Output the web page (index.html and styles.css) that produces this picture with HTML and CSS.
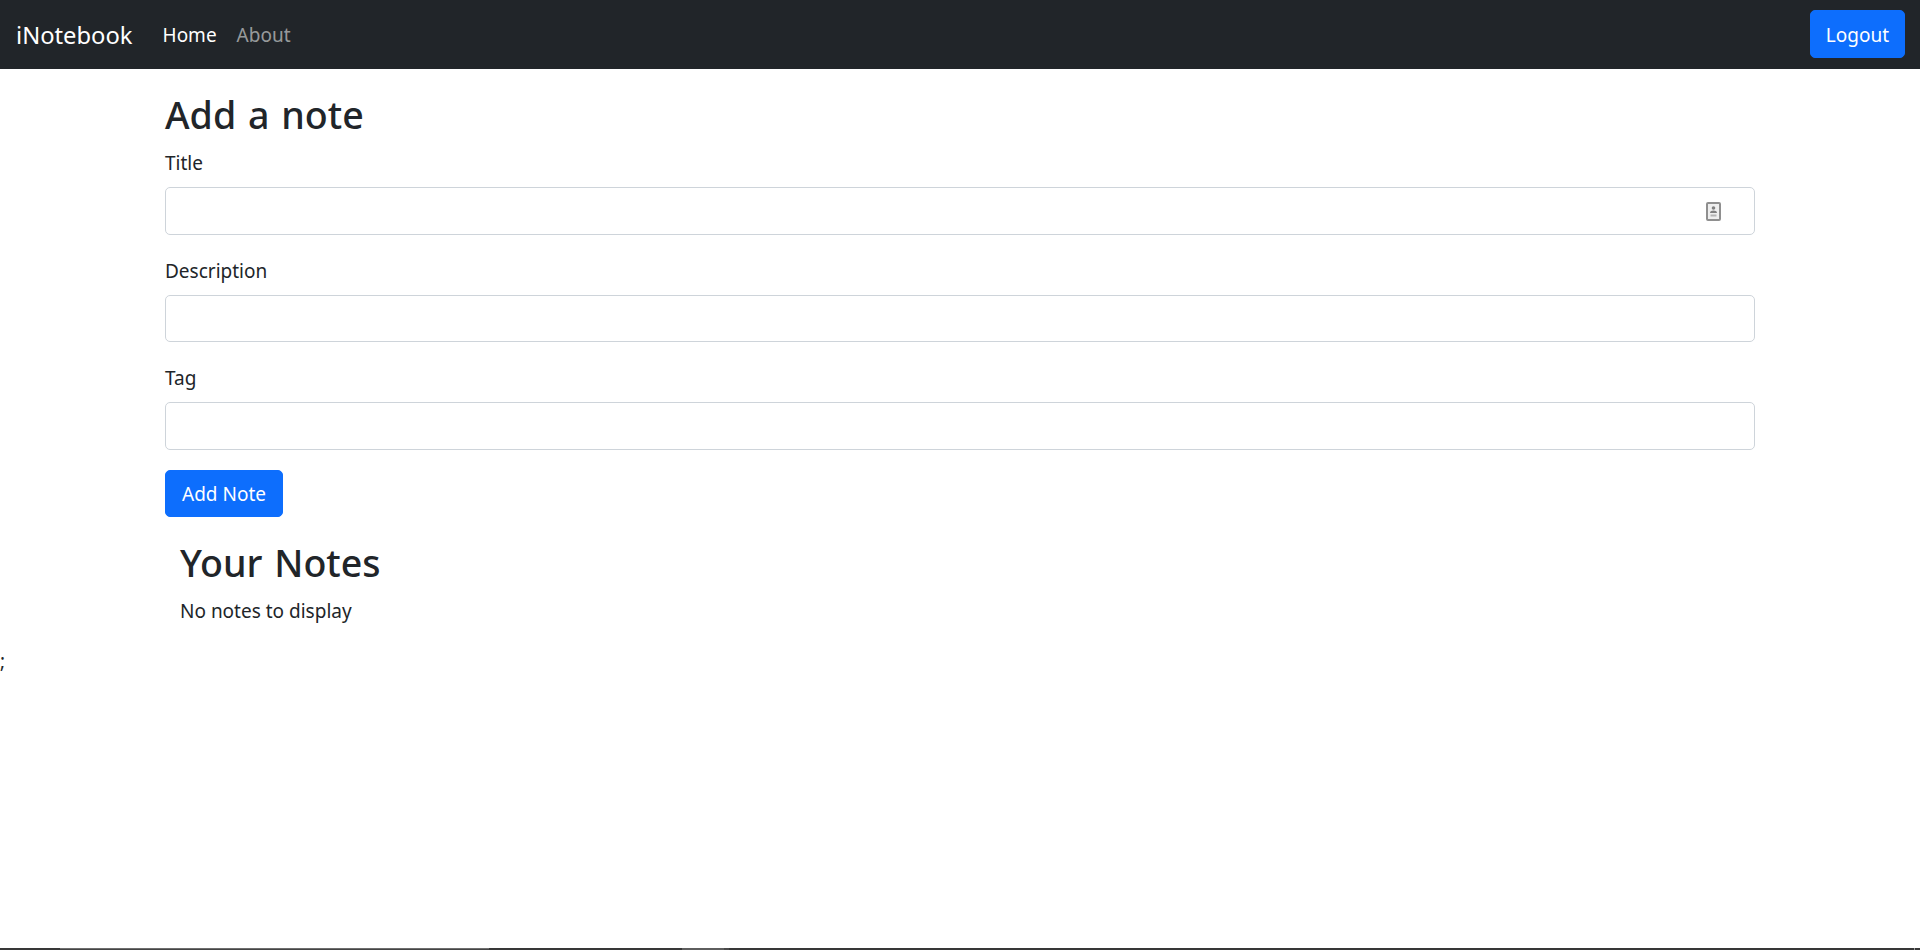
FILE: index.html
```html
<!DOCTYPE html>
<html lang="en">
<head>
<meta charset="utf-8">
<title>iNotebook</title>
<link rel="stylesheet" href="styles.css">
</head>
<body>
<nav class="navbar">
  <a class="brand" href="#">iNotebook</a>
  <ul class="nav-links">
    <li><a class="nav-link active" href="#">Home</a></li>
    <li><a class="nav-link" href="#">About</a></li>
  </ul>
  <button class="btn logout" type="button">Logout</button>
</nav>
<main class="container">
  <h2 class="heading">Add a note</h2>
  <form class="note-form">
    <div class="field">
      <label class="label" for="title">Title</label>
      <div class="input-wrap">
        <input class="input" id="title" type="text">
        <svg class="autofill-icon" width="15" height="19" viewBox="0 0 15 19" aria-hidden="true">
          <rect x="1" y="1" width="13" height="17" rx="1" fill="#eee" stroke="#8f8f8f" stroke-width="2"/>
          <circle cx="7.5" cy="6" r="1.8" fill="#808080"/>
          <path d="M4 11 C4 7.8 11 7.8 11 11 Z" fill="#808080"/>
          <path d="M4.5 13.5 H10.5" stroke="#b4b4b4" stroke-width="2"/>
        </svg>
      </div>
    </div>
    <div class="field">
      <label class="label" for="description">Description</label>
      <input class="input" id="description" type="text">
    </div>
    <div class="field">
      <label class="label" for="tag">Tag</label>
      <input class="input" id="tag" type="text">
    </div>
    <button class="btn add-note" type="button">Add Note</button>
  </form>
  <section class="notes">
    <h2 class="heading">Your Notes</h2>
    <p class="empty">No notes to display</p>
  </section>
</main>
<div class="stray">;</div>
<div class="taskbar">
  <span class="seg seg-a"></span>
  <span class="seg seg-b"></span>
  <span class="seg seg-c"></span>
  <span class="seg seg-d"></span>
  <span class="seg seg-e"></span>
  <span class="seg seg-f"></span>
  <span class="seg seg-g"></span>
  <span class="seg seg-h"></span>
</div>
</body>
</html>
```

FILE: styles.css
```css
* {
  box-sizing: border-box;
}

html,
body {
  margin: 0;
  padding: 0;
}

body {
  background: #fff;
  color: #212529;
  font-family: "Noto Sans", "Open Sans", sans-serif;
  font-size: 19px;
  line-height: 30px;
}

.navbar {
  display: flex;
  align-items: flex-start;
  height: 69px;
  padding: 10px 15px 0 16px;
  background: #212529;
}

.brand {
  color: #fff;
  font-size: 23.75px;
  line-height: 30px;
  padding: 10px 0 8px;
  margin-right: 30px;
  text-decoration: none;
}

.nav-links {
  display: flex;
  flex: 1;
  gap: 20px;
  margin: 0;
  padding: 0;
  list-style: none;
}

.nav-link {
  display: block;
  padding: 10px 0 8px;
  color: rgba(255, 255, 255, 0.55);
  text-decoration: none;
}

.nav-link.active {
  color: #fff;
}

.btn {
  display: block;
  height: 47.5px;
  padding: 3px 15px 0;
  border: 1px solid #0d6efd;
  border-radius: 5px;
  background: #0d6efd;
  color: #fff;
  font: inherit;
}

.add-note {
  padding: 1px 16px 0;
}

.container {
  margin: 20px 0 0;
  padding: 0 165px;
}

.heading {
  margin: 0 0 10px;
  padding-top: 4px;
  font-size: 37.6px;
  font-weight: 500;
  line-height: 44px;
  word-spacing: 2px;
}

.field {
  margin-bottom: 20px;
}

.label {
  display: block;
  margin-bottom: 10px;
  padding-top: 3px;
  line-height: 27px;
}

.input-wrap {
  position: relative;
}

.input {
  display: block;
  width: 100%;
  height: 47.5px;
  padding: 0 15px;
  border: 1px solid #ced4da;
  border-radius: 5px;
  background: #fff;
  font: inherit;
}

.autofill-icon {
  position: absolute;
  top: 15px;
  right: 34px;
}

.notes {
  margin-top: 20px;
  padding-left: 15px;
}

.empty {
  margin: 0;
  padding-top: 3px;
  line-height: 27px;
}

.stray {
  margin-top: 20px;
  padding-top: 2px;
  line-height: 28px;
}

.taskbar {
  position: fixed;
  left: 0;
  right: 0;
  bottom: 0;
  display: flex;
  height: 2px;
  background: #383838;
}

.seg {
  display: block;
}

.seg-a {
  width: 60px;
}

.seg-b {
  width: 429px;
  border-top: 1px solid #6e6e6e;
  background: #454545;
}

.seg-c {
  width: 193px;
}

.seg-d {
  width: 42px;
  background: #5e5e5e;
}

.seg-e {
  width: 5px;
  background: #4a4a4a;
}

.seg-f {
  flex: 1;
}

.seg-g {
  width: 1px;
  background: #999;
}

.seg-h {
  width: 5px;
}
```
